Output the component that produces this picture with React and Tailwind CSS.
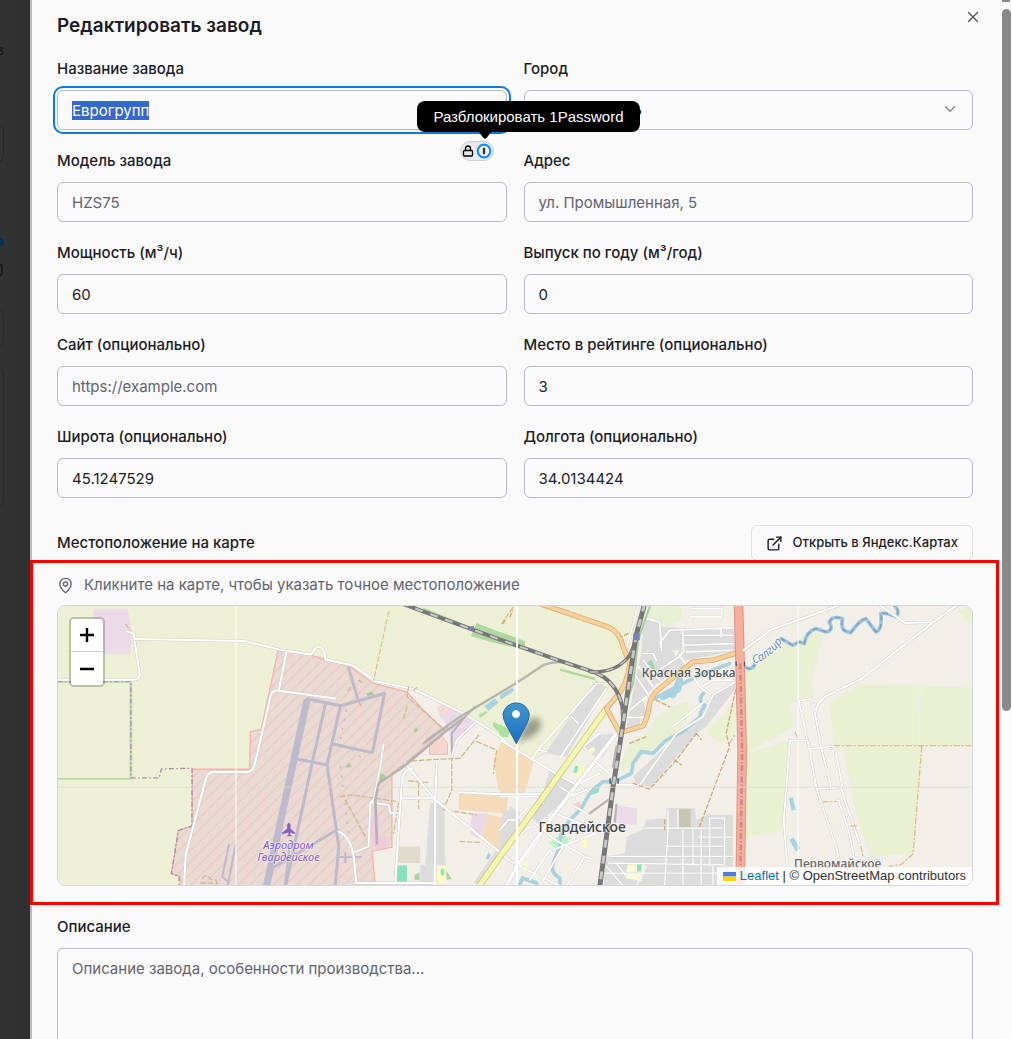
import { useEffect, useRef } from 'react';
import { ChevronDown, ExternalLink, Lock, MapPin, X } from 'lucide-react';

const control =
  'h-10 w-full rounded-md border border-[#b9bbc9] bg-transparent px-3.5 text-[15px] text-[#1c1d26] placeholder:text-[#626470]';

function Label({ htmlFor, children }) {
  return (
    <label htmlFor={htmlFor} className="block text-[15px] leading-5 font-medium text-[#1c1d26]">
      {children}
    </label>
  );
}

function Field({ id, label, children, ...input }) {
  return (
    <div className="relative flex flex-col gap-[11px]">
      <Label htmlFor={id}>{label}</Label>
      <input id={id} className={control} {...input} />
      {children}
    </div>
  );
}

function NameField() {
  const ref = useRef(null);
  useEffect(() => {
    ref.current.focus({ preventScroll: true });
    ref.current.select();
  }, []);
  return (
    <div className="relative flex flex-col gap-[11px]">
      <Label htmlFor="name">Название завода</Label>
      <input
        id="name"
        ref={ref}
        defaultValue="Еврогрупп"
        className={
          control +
          ' outline-[#0a7aea] selection:bg-[#3367d1] selection:text-white focus:outline-2 focus:outline-offset-2'
        }
      />
      <button
        type="button"
        aria-label="1Password"
        className="absolute top-[82px] right-[13px] z-10 flex h-5 w-[34px] items-center justify-center gap-0.5 rounded-full border border-[#cfcfcf] bg-[#e9e9e9] text-black"
      >
        <Lock className="size-3" strokeWidth={2.6} />
        <svg viewBox="0 0 16 16" className="size-4">
          <circle cx="8" cy="8" r="6.300" fill="#f4f4f4" stroke="#1a8cff" strokeWidth="2.2" />
          <path d="M8 4.800v6.400" stroke="#333" strokeWidth="2.4" />
        </svg>
      </button>
      <div
        role="tooltip"
        className="absolute top-[42px] -right-[133px] z-20 rounded-lg bg-black px-4 py-1 font-['Liberation_Sans',sans-serif] text-[15px] leading-[23px] whitespace-nowrap text-white"
      >
        Разблокировать 1Password
        <svg viewBox="0 0 14 8" className="absolute top-full left-[61px] h-[7px] w-3.5">
          <path d="M0 0h14L9 6.500Q7 8.500 5 6.500Z" />
        </svg>
      </div>
    </div>
  );
}

function Road({ d, w = 8, c = '#fff', casing = '#cfcdca', cw = 3 }) {
  return (
    <>
      <path d={d} stroke={casing} strokeWidth={w + cw} />
      <path d={d} stroke={c} strokeWidth={w} />
    </>
  );
}

function Rail({ d, w = 10 }) {
  return (
    <>
      <path d={d} stroke="#777" strokeWidth={w} />
      <path d={d} stroke="#c8c8c8" strokeWidth={w - 6} strokeDasharray="24 24" strokeLinecap="butt" />
    </>
  );
}

function MapDrawing() {
  return (
    <svg
      viewBox="21 15 2748 843"
      preserveAspectRatio="xMidYMid slice"
      className="block h-[279px] w-full"
      role="img"
      aria-label="Карта"
      fontFamily="'Noto Sans', sans-serif"
    >
      <defs>
        <pattern id="hatch" width="25" height="25" patternUnits="userSpaceOnUse" patternTransform="rotate(45)">
          <rect width="25" height="25" fill="#e9dad4" />
          <path d="M3 0V25" stroke="#efccc6" strokeWidth="5" />
        </pattern>
        <linearGradient id="pin" x2="0" y2="1">
          <stop offset="0" stopColor="#4196d2" />
          <stop offset="1" stopColor="#1a6fc0" />
        </linearGradient>
        <filter id="soft" x="-50%" y="-50%" width="200%" height="200%">
          <feGaussianBlur stdDeviation="10" />
        </filter>
      </defs>
      <rect x="0" y="0" width="2800" height="880" fill="#f2efe9" />

      {/* Fields, airfield and the industrial plot in the west */}
      <path
        d="M0 0H1775L1735 200L1715 310L1640 240L1500 450L1450 480L1350 420L1270 355L1090 270L970 245L600 510L395 870H0Z"
        fill="#edf0d5"
      />
      <path d="M127 25H230L243 95L238 161H127Z" fill="#ebdbe8" />
      <path
        d="M683 150L632 388L600 395L597 508H425L424 678L383 692L362 822L388 830L390 870H980L975 858L965 755L1025 742V520L1185 395L1120 330L1070 275L970 250L900 200L830 180L780 165Z"
        fill="url(#hatch)"
        stroke="#f0b4ab"
        strokeWidth="4"
      />

      {/* Land use in the centre */}
      <g transform="translate(690 0)">
        <path d="M470 320L500 310L560 345L585 368L540 405L525 430L515 470L505 380L480 350Z" fill="#ead9e6" />
        <path d="M480 315L520 330L490 345L470 330Z" fill="#f4d9d8" />
        <path d="M448 425L485 405L502 430V463H448Z" fill="#f6d5cf" stroke="#f3b9b2" strokeWidth="3" />
        <path d="M665 425L720 445V580L655 570L640 480Z" fill="#f5dbb9" />
        <path d="M537 580L683 592L680 642L535 630Z" fill="#f5dbb9" />
        <path d="M620 642L672 655L655 750L605 722Z" fill="#f5dbb9" />
        <path d="M575 642H620L605 718L570 705Z" fill="#e9d8e6" />
        <path d="M450 610H493V770H497V797H435Z" fill="#dcdcdc" />
        <path d="M420 797H458V855H420Z" fill="#dcdcdc" />
        <path d="M350 740H420V790H350Z" fill="#dedccd" />
        <path d="M350 797H380V846H350Z" fill="#88e0be" />
        <path d="M468 797H495V850H470Z" fill="#fbfcc4" />
        <path d="M482 808H492V826H482Z" fill="#88e0be" />
        <path d="M272 650H295L300 710H322L320 740L290 750L275 730Z" fill="#efcbdb" />
        <path d="M690 620L720 640V700L690 740L600 850H580L670 720V680Z" fill="#dcdcdc" />
        <path d="M640 365L680 385L690 400L665 415L655 395L638 378Z" fill="#aee0a0" />
        <path d="M595 345L618 333L622 338L600 354Z" fill="#aee0a0" />
        <path d="M612 318L645 295L655 308L625 332ZM658 288L695 264L702 272L665 298Z" fill="#aad3df" />
        <path d="M590 68L720 120V145L650 130L572 108Z" fill="#aed8a0" />
        <path d="M430 22L560 75L550 84L430 40Z" fill="#aed8a0" />
        <path d="M300 520L318 528L310 545L295 540ZM258 280L275 274L282 284L262 288ZM400 390L408 382L414 390L406 398ZM195 498L208 490L214 500L202 504Z" fill="#a8cc93" />
        <path d="M403 825L418 818V842L403 840ZM498 812L515 838L500 840Z" fill="#add19e" />
        <path d="M617 775L625 758L633 764L625 780Z" fill="#aad3df" />
      </g>

      {/* Town blocks */}
      <g transform="translate(1350 0)">
        <path d="M0 95L75 122V138L0 116ZM180 205L285 232V240L180 212Z" fill="#aed8a0" />
        <path d="M0 372L28 392L25 412L0 410Z" fill="#aee0a0" />
        <path d="M0 285L38 262L42 270L0 296Z" fill="#aad3df" />
        <path d="M0 430L45 440L102 482L75 580L0 580Z" fill="#f5dbb9" />
        <path d="M0 585H25L15 640L0 640ZM0 650H12L5 690H0Z" fill="#f5dbb9" />
        <path d="M445 15H545V60L505 80L435 60Z" fill="#e9efd2" />
        <path d="M440 55L480 62L485 78L555 85L710 82L708 150L640 165L555 180L560 195L470 250L430 300L440 345L425 350L420 375L380 385L405 250L425 160L430 90Z" fill="#dcdcdc" />
        <path d="M290 240L320 265L200 470L140 460L100 480L140 455L270 265Z" fill="#dcdcdc" />
        <path d="M150 510L235 560L205 590L115 670L95 655L120 610Z" fill="#dcdcdc" />
        <path d="M290 405L350 400L310 470L285 470L255 440Z" fill="#dcdcdc" />
        <path d="M10 630L60 640L0 740V700Z" fill="#dcdcdc" />
        <path d="M640 285L708 240V265L620 380L590 400L455 560L410 555L400 530L530 410L590 360Z" fill="#dcdcdc" />
        <path d="M440 660L500 655L500 625H585L590 660L625 645L700 645V858H310L320 770L375 760L382 710L430 690Z" fill="#dcdcdc" />
        <path d="M536 628H573V685H536Z" fill="#c6c7b2" />
        <path d="M355 618L412 625L410 675L345 668Z" fill="#ebdae7" />
        <path d="M385 790L438 792L425 845L375 835Z" fill="#fbfcd3" />
        <path d="M412 795L426 792L424 815L412 815Z" fill="#88e0be" />
        <path d="M510 320L565 305L572 345L530 400L440 460L395 500L360 515L365 480L390 430L440 400L470 350Z" fill="#e9efd2" />
        <path d="M708 300V400L660 430L620 400ZM715 200V300L708 290ZM740 200H750V710H740Z" fill="#eaf0d2" />
        <path d="M442 188L456 178L467 205L453 208Z" fill="#a9d3b6" />
        <path d="M515 150L540 148L530 168Z" fill="#f2efe9" />
        <path d="M232 490L258 510L240 537L218 520ZM265 450L282 440L288 452L270 462ZM145 650L165 638L162 655L146 660ZM250 712L264 705L260 745L244 742ZM70 782L86 785L78 820L66 810Z" fill="#fbfcc4" />
        <path d="M225 500L236 497L230 520L220 518ZM278 562L303 545L296 578L272 585Z" fill="#88e0be" />
        <path d="M180 705L208 715L200 740L165 745L148 730Z" fill="#b3f7c5" />
        <path d="M222 612L240 604L246 625L226 628Z" fill="#f8cfc8" />
      </g>

      {/* Land use in the east */}
      <g transform="translate(2040 0)">
        <path d="M45 210L110 170L175 130L260 95L283 105L247 240L255 290L210 305L180 310L192 382L50 460Z" fill="#eaf0d2" />
        <path d="M50 462L165 425L180 430L160 695L50 710Z" fill="#eaf0d2" />
        <path d="M300 310L385 253L730 262V437H315Z" fill="#eaf0d2" />
        <path d="M340 440H578L552 762L420 770L370 600Z" fill="#eaf0d2" />
        <path d="M690 35L710 20L730 20V85Z" fill="#eaf0d2" />
        <path d="M50 460L160 420M572 260L570 437" stroke="#f2efe9" strokeWidth="5" />
        <path d="M178 595L190 592L199 630L187 633ZM180 720L192 713L212 745L200 756Z" fill="#a5d3de" />
      </g>

      <g fill="none" strokeLinecap="round" strokeLinejoin="round">
        {/* West */}
        <path d="M21 244H240V534" stroke="#c7dfb5" strokeWidth="9" />
        <path d="M21 537H240" stroke="#b9dba8" strokeWidth="5" />
        <path d="M21 244H240V534H325L332 507L424 505V678L383 692L362 822L385 830V858" stroke="#a58fae" strokeWidth="4" strokeDasharray="12 10 2 10" />
        <Road d="M21 239H250Q268 236 267 222L248 100L228 94" w={6} />
        <Road d="M250 116L580 122L690 149L780 163Q787 160 790 150Q806 128 820 152L826 178L910 197L975 243L1090 267L1250 345L1275 362L1340 402L1408 460" w={6} />
        <Road d="M708 155L685 270M855 295L685 272Q665 268 660 288L612 495Q606 516 588 516H488Q470 518 466 535L405 765L400 858" w={6} />
        <path d="M1015 35L970 240" stroke="#d6c59a" strokeWidth="4" strokeDasharray="14 9" />
        <path d="M172 600L178 690L168 850" stroke="#eef0dc" strokeWidth="4" />

        {/* Airfield runways and taxiways */}
        <g stroke="#bcbacb">
          <path d="M770 298L648 858" strokeWidth="21" strokeLinecap="butt" />
          <path d="M770 296L870 317L1003 280L966 458L850 433M870 317L830 495L742 478M825 312L785 490L706 855M830 495L865 740L855 855M895 205L922 295M860 690L780 738L665 805" strokeWidth="9" />
          <path d="M555 735L532 855M535 735L515 830L530 845M865 772H932M885 760V788M717 740L703 855" strokeWidth="6" />
          <path d="M888 330L868 430M870 500L895 700M905 450L930 470" strokeWidth="4" strokeDasharray="4 24" />
        </g>
        <g stroke="#d0b98e" strokeWidth="4" strokeDasharray="14 8">
          <path d="M455 835Q470 820 482 840M450 850H488M495 840L500 855M225 72L238 90M870 590L905 585L1040 605M885 600L945 710M925 240L935 247M893 272L900 262M925 305L935 322" />
          <path d="M1075 260L1070 290L1180 385M1100 262L1085 275M1060 355L1070 320M1085 483L1160 478L1230 475L1290 400M1205 470V570L1180 630L1280 645M1075 543L1140 548M1105 550L1105 625M1280 425L1340 450L1330 520M1230 725L1290 728M1045 610L1030 700M1355 70L1390 20" />
        </g>
        <Road d="M1000 432L990 500L970 600L960 608L955 740L905 760M960 608L1015 615L1020 640H1048" w={5} />
        <Road d="M865 695Q900 710 910 770L918 850H1160M1035 850L1055 540Q1060 510 1085 505M1065 490L1155 600L1390 790M1050 595H1155M1155 600L1160 490M1155 605V855M1225 577L1350 583H1480" w={6} />
        <path d="M980 730L975 600L985 550L1060 500L1185 395L1240 355" stroke="#b5b3b3" strokeWidth="8" />
        <path d="M1120 430L1190 380M1130 420L1230 350L1400 248L1480 195Q1510 182 1545 187" stroke="#b5b3b3" strokeWidth="7" />
        <path d="M1205 455V400L1240 355L1275 320" stroke="#b5b3b3" strokeWidth="6" />
        <Road d="M1205 470L1220 420L1275 368" w={5} />

        {/* Rivers */}
        <g stroke="#a9d2de">
          <path d="M2040 190L1950 225L1880 260L1810 298M1962 280Q1940 300 1968 318Q1950 330 1952 350L1900 395L1850 420L1810 460L1775 455L1750 490L1745 520L1695 545L1660 545L1620 580L1595 625L1560 660L1535 700L1525 750L1510 790Q1500 820 1530 835L1530 858" strokeWidth="11" />
          <path d="M1840 290L1885 268L1890 240L1870 285" strokeWidth="20" />
          <path d="M1408 858L1418 835L1460 850" strokeWidth="12" />
        </g>
        <path
          d="M2070 185Q2100 220 2115 195M2195 115L2230 135L2250 125L2265 130Q2270 95 2300 85L2330 95Q2355 90 2340 65Q2350 45 2380 55Q2370 95 2405 97Q2430 60 2450 55Q2465 75 2480 95Q2500 90 2495 40Q2510 35 2540 50Q2555 35 2535 15"
          stroke="#9bc6d8"
          strokeWidth="11"
        />
        <path
          d="M2070 185Q2100 220 2115 195M2195 115L2230 135L2250 125L2265 130Q2270 95 2300 85L2330 95Q2355 90 2340 65Q2350 45 2380 55Q2370 95 2405 97Q2430 60 2450 55Q2465 75 2480 95Q2500 90 2495 40Q2510 35 2540 50Q2555 35 2535 15"
          stroke="#8499c4"
          strokeWidth="4"
          strokeDasharray="14 12"
        />

        {/* Town streets */}
        <g transform="translate(1350 0)">
          <Road d="M415 20L375 160" w={5} />
          <Road d="M310 250L290 250L110 455L95 480M320 265L180 475M215 350L235 370M140 455L115 450L95 475M0 420L150 510L265 575M120 555L135 580M0 590H110L130 610M0 690L25 660L50 660L85 620" w={5} cw={2} />
          <Road d="M350 400L265 510L165 640L50 800L20 858" w={10} />
          <Road d="M300 400L250 440L260 450M285 485L335 525L345 545M240 550L300 520M210 590L260 570M105 670L165 720L255 770L310 790M165 640L240 670L310 700M60 800L180 858M0 765L60 800L120 715M90 840L150 750M120 858L190 740M200 858L255 770M60 705L90 680M160 750L290 700M225 620L260 640M180 560L225 590" w={5} cw={2} />
          <Road d="M440 55L480 65L485 150M548 85L552 155L540 165L600 260L635 285M705 82L510 90L480 130M700 105H550M700 130L550 135M570 50H665M575 25L670 25L665 45M560 155L700 150M665 82V110M430 160H460L470 180M545 165L470 215M600 262L640 240H700M380 352H440M390 200L450 290M410 190L460 260M430 180L480 240M440 290L390 330" w={5} cw={2} />
          <Road d="M708 245L640 285L610 350L530 400L420 555H340M620 300L520 380" w={5} cw={2} />
          <Road d="M330 770H700M325 790L670 795M310 820H690M430 685H670M595 712H700M505 740H670M505 630V690L495 858M535 628V685H580V800M630 655V800M675 655V800M630 655H675M605 690V858M550 690V858M440 800L410 858M320 800L370 858M350 790L380 830M640 800V858" w={4} cw={2} />
          <g stroke="#c9ab75" strokeWidth="4" strokeDasharray="12 8">
            <path d="M708 270L680 400L690 440L660 520L600 680M590 400L530 480L450 568L400 550M470 300L510 320M390 430L440 410M495 660V690M385 100L365 110M590 400L605 418M525 480L545 495M10 70L15 60M30 50L38 30" />
          </g>

          <Road d="M-66 864L0 770L120 605L320 325" w={15} c="#f4f5ae" casing="#c8cc80" cw={5} />
          <Road d="M120 10L325 80Q360 95 370 140L390 190Q385 250 350 290L320 325L360 398L430 378Q445 350 450 310Q455 285 480 265L580 185L640 180L712 158" w={11} c="#f7d09c" casing="#dcae70" cw={5} />
          <path d="M450 20L415 120L400 250L375 320" stroke="#a9cfa0" strokeWidth="7" />
          <Rail d="M-300 8L0 118L175 180L280 215Q350 240 368 320L370 370" w={12} />
          <Rail d="M270 215Q350 220 390 165L400 140" w={10} />
          <Rail d="M435 10L408 110L370 370L340 560L300 860" w={15} />
          <path d="M270 640L325 600M350 615L345 665M350 440L340 500" stroke="#b9b5b5" strokeWidth="7" />
          <path d="M400 100H420V120H400Z" fill="#7c82bd" />
          <path d="M-92 78H-78V90H-92Z" fill="#7c82bd" />
          <path d="M331 536V550M355 536V550" stroke="#555" strokeWidth="4" />

          <path d="M717 10L722 200L728 450L722 860" stroke="#e2937f" strokeWidth="29" />
          <path d="M717 10L722 200L728 450L722 860" stroke="#f7ae9c" strokeWidth="23" />
          <path d="M722 190L728 450L722 860" stroke="#cf8a8d" strokeWidth="8" strokeDasharray="18 6 4 6" strokeLinecap="butt" />
          <path d="M710 186V196M735 186V196" stroke="#555" strokeWidth="4" />
        </g>

        {/* East roads */}
        <g transform="translate(2040 0)">
          <Road d="M42 150L125 88L330 15M445 10L528 68L612 66L690 10M612 66L395 237L290 288Q255 315 258 345" w={6} />
          <Road d="M230 422H182L163 660L173 800M208 302L246 296L258 345L275 440L305 562M208 302L240 447L262 568L320 740L330 785M240 447L315 438L340 562L262 568M335 562L345 595L390 728M328 600L360 700L375 776H458" w={5} cw={3} />
          <path d="M315 437H725M578 440L552 762L515 795L480 800M280 605H320M365 678H383M395 740L402 775M198 398L204 412M0 430L18 400" stroke="#d8c08a" strokeWidth="4" strokeDasharray="16 8 4 8" />
        </g>
      </g>

      {/* Tile seams */}
      <path d="M556 0V870M2246 0V870" stroke="#fff" strokeWidth="3" />
      <path d="M1401 0V870" stroke="#fff" strokeWidth="6" />
      <path d="M0 562H2800" stroke="#d9d9d2" strokeWidth="2" />

      {/* Place names */}
      <g textAnchor="middle" paintOrder="stroke" strokeLinejoin="round" stroke="#fff" strokeOpacity="0.5" strokeWidth="5">
        <g fill="#8461c4" fontSize="33" fontStyle="italic">
          <path d="M713 671Q718 665 720 675V687L733 698V703L720 698L719 704L725 709H708L714 704V698L695 703V698L710 687V675Z" strokeWidth="0" />
          <text x="714" y="748">Аэродром</text>
          <text x="714" y="785">Гвардейское</text>
        </g>
        <text x="1597" y="697" fontSize="42" fill="#444" fontWeight="500">Гвардейское</text>
        <text x="1917" y="232" fontSize="36" fill="#555" fontWeight="500">Красная Зорька</text>
        <text x="2365" y="806" fontSize="36" fill="#666" fontWeight="500">Первомайское</text>
        <path id="river" d="M2112 190Q2160 180 2205 115" fill="none" stroke="none" />
        <text fontSize="34" fill="#6b8ec4" fontStyle="italic" textAnchor="start">
          <textPath href="#river">Салгир</textPath>
        </text>
      </g>

      {/* Marker */}
      <path d="M1402 430L1420 385Q1440 345 1465 355Q1485 375 1455 405Z" fill="#000" opacity="0.35" filter="url(#soft)" />
      <path
        d="M1399 431L1367 372Q1359 356 1359 342A40 40 0 0 1 1438 342Q1438 356 1430 372Z"
        fill="url(#pin)"
        stroke="#2e6c97"
        strokeWidth="3"
      />
      <circle cx="1398" cy="342" r="13" fill="#fff" stroke="#2e6c97" strokeWidth="2" />
    </svg>
  );
}

function LocationMap() {
  return (
    <div className="relative overflow-hidden rounded-lg border border-[#d6d6dc]">
      <MapDrawing />
      <div className="absolute top-[11px] left-[11px] flex flex-col rounded-[5px] border-2 border-black/20 bg-white bg-clip-padding text-black">
        <button type="button" aria-label="Приблизить" className="flex h-[33px] w-8 items-center justify-center border-b border-[#ccc]">
          <svg viewBox="0 0 14 14" className="size-3.5" stroke="currentColor" strokeWidth="2.4">
            <path d="M0 7h14M7 0v14" />
          </svg>
        </button>
        <button type="button" aria-label="Отдалить" className="flex h-[33px] w-8 items-center justify-center">
          <svg viewBox="0 0 14 14" className="size-3.5" stroke="currentColor" strokeWidth="2.4">
            <path d="M0 7h14" />
          </svg>
        </button>
      </div>
      <div className="absolute right-0 bottom-0 flex items-center bg-white/80 px-1.5 font-['Liberation_Sans',sans-serif] text-[13px] leading-[18px] text-[#333]">
        <svg viewBox="0 0 12 8" className="mr-1 h-[9px] w-[13px]" preserveAspectRatio="none">
          <path fill="#4c7be1" d="M0 0h12v4H0z" />
          <path fill="#ffd500" d="M0 4h12v4H0z" />
        </svg>
        <a href="#leaflet" className="text-[#0078a8]">Leaflet</a>
        <span className="whitespace-pre"> | © OpenStreetMap contributors</span>
      </div>
    </div>
  );
}

function DimmedPage() {
  return (
    <aside aria-hidden="true" className="flex w-[30px] shrink-0 flex-col overflow-hidden bg-[#333] bg-linear-to-r from-[#333] to-[#2f2f2f]">
      <span className="mt-10 -ml-1 text-sm leading-5 text-[#161616]">в</span>
      <div className="mt-[65px] -ml-6 h-[37px] w-7 rounded-md border border-[#262626]" />
      <div className="mt-[76px] -ml-1 size-2 rounded-full bg-[#032f5c]" />
      <div className="mt-[18px] -ml-2 h-3 w-[11px] rounded-xs border-2 border-[#1c1c1c]" />
      <div className="mt-8 -ml-6 h-10 w-7 rounded-md border border-[#2c2c2c]" />
      <div className="mt-[21px] -ml-6 h-[138px] w-7 rounded-md border border-[#2a2a2a]" />
    </aside>
  );
}

export default function App() {
  return (
    <div className="flex h-screen overflow-hidden bg-[#fafafa] font-[Inter,sans-serif] text-[#1c1d26]">
      <DimmedPage />
      <main className="relative min-w-0 flex-1 border-l-2 border-[#b8b8be] pt-3.5 pr-[27px] pl-[25px]">
        <button type="button" aria-label="Закрыть" className="absolute top-2 right-[18px] p-0 text-[#55565c]">
          <X className="size-[18px]" strokeWidth={1.8} />
        </button>
        <h1 className="text-[19px] leading-6 font-semibold">Редактировать завод</h1>

        <form className="mt-[21px]">
          <div className="grid grid-cols-2 gap-x-[17px] gap-y-[21px]">
            <NameField />
            <div className="flex flex-col gap-[11px]">
              <Label htmlFor="city">Город</Label>
              <div className="relative">
                <select id="city" className={control + ' appearance-none'}>
                  <option>Симферополь</option>
                </select>
                <ChevronDown className="pointer-events-none absolute top-2.5 right-3.5 size-[18px] text-[#86868c]" strokeWidth={1.8} />
              </div>
            </div>
            <Field id="model" label="Модель завода" placeholder="HZS75" />
            <Field id="address" label="Адрес" placeholder="ул. Промышленная, 5" />
            <Field id="power" label="Мощность (м³/ч)" defaultValue="60" />
            <Field id="output" label="Выпуск по году (м³/год)" defaultValue="0" />
            <Field id="site" label="Сайт (опционально)" placeholder="https://example.com" />
            <Field id="rank" label="Место в рейтинге (опционально)" defaultValue="3" />
            <Field id="lat" label="Широта (опционально)" defaultValue="45.1247529" />
            <Field id="lng" label="Долгота (опционально)" defaultValue="34.0134424" />
          </div>

          <div className="mt-[27px] flex items-center justify-between">
            <h2 className="text-[15px] leading-5 font-medium">Местоположение на карте</h2>
            <button type="button" className="flex h-9 items-center gap-2.5 rounded-md border border-[#e0e0e4] px-3.5 text-[13px] font-medium">
              <ExternalLink className="size-[17px]" strokeWidth={2} />
              Открыть в Яндекс.Картах
            </button>
          </div>

          <section className="relative mt-3.5">
            <div className="pointer-events-none absolute -top-[15px] -right-[26px] -bottom-[19px] -left-[27px] z-10 border-3 border-[#ff0000]" />
            <p className="mb-2.5 flex items-center gap-2.5 text-[15px] leading-5 text-[#626470]">
              <MapPin className="size-[17px]" strokeWidth={1.9} />
              Кликните на карте, чтобы указать точное местоположение
            </p>
            <LocationMap />
          </section>

          <div className="mt-[31px] flex flex-col gap-[11px]">
            <Label htmlFor="description">Описание</Label>
            <textarea
              id="description"
              placeholder="Описание завода, особенности производства..."
              className="h-36 w-full resize-none rounded-md border border-[#b9bbc9] bg-transparent px-3.5 py-2 text-[15px] leading-6 placeholder:text-[#626470]"
            />
          </div>
        </form>
      </main>
      <div aria-hidden="true" className="flex w-3 shrink-0 flex-col items-center gap-[7px] bg-[#fcfcfc]">
        <div className="h-0.5 w-2 bg-[#8a8a8a]" />
        <div className="h-[702px] w-[9px] rounded-full bg-[#8a8a8a]" />
      </div>
    </div>
  );
}
